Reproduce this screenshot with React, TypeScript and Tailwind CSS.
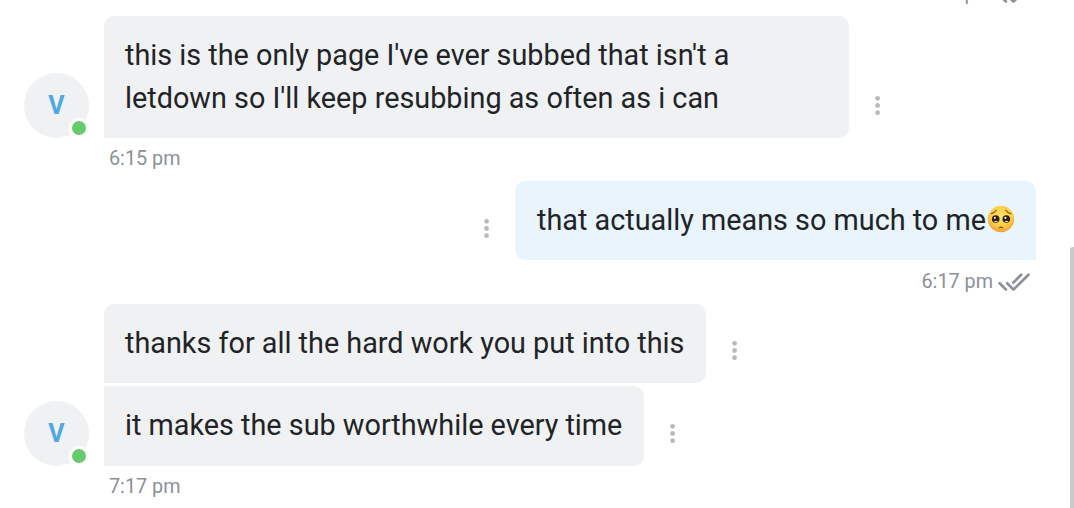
import type { ReactNode } from "react";

const Dots = () => (
    <svg className="shrink-0" width="6" height="22" viewBox="0 0 6 22" fill="#b8babf">
        <circle cx="2.6" cy="3.3" r="2.4" />
        <circle cx="2.6" cy="10.5" r="2.4" />
        <circle cx="2.6" cy="17.7" r="2.4" />
    </svg>
);

const DoubleCheck = () => (
    <svg width="34" height="20" viewBox="0 0 34 20" fill="none" stroke="#8a919b" strokeWidth="2.7" strokeLinecap="round" strokeLinejoin="round">
        <path d="M1.6 11.2 8 17.6" />
        <path d="M9.2 11.2 15.5 17.6 30.4 2.8" />
        <path d="M15.3 10.6 23.2 2.8" />
    </svg>
);

const PleadingFace = () => (
    <svg width="28" height="28" viewBox="0 0 28 28" role="img" aria-label="pleading face">
        <defs>
            <radialGradient id="face" cx="50%" cy="38%" r="62%">
                <stop offset="0" stopColor="#ffe56a" />
                <stop offset="0.65" stopColor="#fdcc45" />
                <stop offset="1" stopColor="#f0a02c" />
            </radialGradient>
        </defs>
        <circle cx="14" cy="14" r="13.2" fill="url(#face)" />
        <g fill="none" stroke="#8a4b12" strokeWidth="1.1" strokeLinecap="round">
            <path d="M4.4 8.6Q7.4 7.9 9.3 5.2" />
            <path d="M23.6 8.6Q20.6 7.9 18.7 5.2" />
            <path d="M12.2 22.9Q14 21.3 15.8 22.9" />
        </g>
        <circle cx="8.7" cy="14" r="3.8" fill="#2f1c10" />
        <circle cx="19.3" cy="14" r="3.8" fill="#2f1c10" />
        <circle cx="7.8" cy="12.8" r="1.1" fill="#fff" />
        <circle cx="18.4" cy="12.8" r="1.1" fill="#fff" />
        <ellipse cx="8.9" cy="16.4" rx="1.9" ry="0.7" fill="#c3ccd6" />
        <ellipse cx="19.5" cy="16.4" rx="1.9" ry="0.7" fill="#c3ccd6" />
    </svg>
);

const Avatar = () => (
    <div className="relative flex size-[65px] shrink-0 items-center justify-center rounded-full bg-[#f0f1f3] text-[25px] font-bold text-[#4ea8e4]">
        V
        <span className="absolute right-0 bottom-0 size-5 rounded-full border-[3px] border-white bg-[#68cb6b]" />
    </div>
);

const Time = ({ children }: { children: ReactNode }) => (
    <p className="pl-[5px] text-[19.8px] leading-[22px] text-[#8a919b]">{children}</p>
);

const App = () => {
    return (
        <div className="relative h-[508px] w-[1074px] overflow-hidden bg-white font-['Roboto',sans-serif] text-[28.8px] leading-[43px] whitespace-nowrap text-[#212327]">
            <div className="-mt-[17px] flex h-[22px] items-center justify-end gap-[5px] pr-[42px]">
                <Time>6:15 pm</Time>
                <DoubleCheck />
            </div>

            <div className="mt-[11px] flex h-[122px] items-end pl-6">
                <Avatar />
                <div className="ml-[15px] h-[122px] w-[745px] rounded-[10px] rounded-bl-none bg-[#f0f1f3] px-[21px] pt-[18px]">
                    <p>this is the only page I've ever subbed that isn't a</p>
                    <p>letdown so I'll keep resubbing as often as i can</p>
                </div>
                <div className="mb-[21px] ml-[26px] flex"><Dots /></div>
            </div>
            <div className="mt-[10px] pl-[104px]"><Time>6:15 pm</Time></div>

            <div className="mt-[11px] flex h-[79px] items-end justify-end pr-[38px]">
                <div className="mr-[25px] mb-5 flex"><Dots /></div>
                <div className="flex h-[79px] w-[521px] rounded-[10px] rounded-br-none bg-[#e9f4fc] pt-[18px] pl-[22px]">
                    <p>that actually means so much to me</p>
                    <div className="mt-[6px] ml-px flex h-7"><PleadingFace /></div>
                </div>
            </div>
            <div className="mt-[11px] flex h-[22px] items-center justify-end gap-[5px] pr-[42px]">
                <Time>6:17 pm</Time>
                <DoubleCheck />
            </div>

            <div className="mt-[11px] flex h-[79px] items-end pl-[104px]">
                <div className="h-[79px] w-[602px] rounded-[10px] rounded-bl-none bg-[#f0f1f3] px-[21px] pt-[18px]">
                    <p>thanks for all the hard work you put into this</p>
                </div>
                <div className="mb-[21px] ml-[26px] flex"><Dots /></div>
            </div>
            <div className="mt-[3px] flex h-[80px] items-end pl-6">
                <Avatar />
                <div className="ml-[15px] h-[80px] w-[540px] rounded-[10px] rounded-l-none bg-[#f0f1f3] px-[21px] pt-[18px]">
                    <p>it makes the sub worthwhile every time</p>
                </div>
                <div className="mb-[21px] ml-[26px] flex"><Dots /></div>
            </div>
            <div className="mt-[10px] pl-[104px]"><Time>7:17 pm</Time></div>

            {/* scrollbar thumb */}
            <div className="absolute top-[247px] right-0 h-[261px] w-1 rounded-tl-[3px] bg-[#c9c9c9]" />
        </div>
    );
};

export default App;
